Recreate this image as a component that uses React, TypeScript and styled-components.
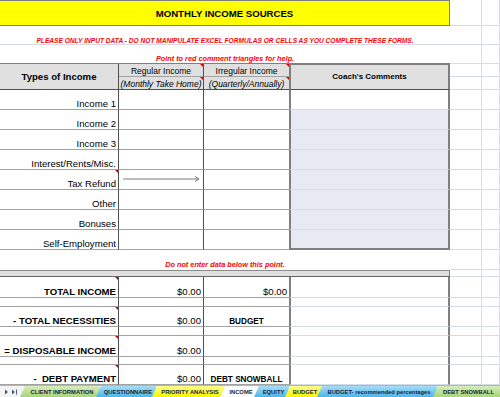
import React from "react";
import styled, { createGlobalStyle, css } from "styled-components";

const GRID = "#d5dbe7";
const LINE = "#a3a3a3";
const DARK = "#505050";
const FRAME = "#7f7f7f";

const GlobalStyle = createGlobalStyle`
  html, body { margin: 0; padding: 0; background: #fff; }
  body { font-family: "Liberation Sans", Arial, sans-serif; overflow: hidden; }
`;

const Page = styled.div`
  width: 500px;
  height: 397px;
  display: flex;
  flex-direction: column;
  overflow: hidden;
  background: #fff;
`;

const Sheet = styled.div`
  display: grid;
  grid-template-columns: 119px 85px 85px 161px 32px 18px;
  grid-template-rows: 26px 19px 19px 13px 13px repeat(8, 20px) 20px 7px 21px 9px 20px 9px 21px 8px 20px;
  height: 385px;
  flex: none;
`;

type CellProps = { $span?: number; $rows?: number; $note?: boolean };

const Cell = styled.div<CellProps>`
  position: relative;
  box-sizing: border-box;
  min-width: 0;
  display: flex;
  align-items: flex-end;
  justify-content: flex-start;
  white-space: pre;
  line-height: 1;
  color: #000;
  border-right: 1px solid ${GRID};
  border-bottom: 1px solid ${GRID};
  grid-column: span ${(p) => p.$span ?? 1};
  grid-row: span ${(p) => p.$rows ?? 1};
  ${(p) =>
    p.$note &&
    css`
      &::after {
        content: "";
        position: absolute;
        top: 0;
        right: 0;
        width: 0;
        height: 0;
        border-style: solid;
        border-width: 0 3px 3px 0;
        border-color: transparent #e00000 transparent transparent;
      }
    `}
`;

const Blank = styled(Cell)``;

const Title = styled(Cell)`
  background: #ffff00;
  border-top: 1px solid ${FRAME};
  border-bottom: 1px solid ${FRAME};
  border-right: 1px solid ${FRAME};
  justify-content: center;
  align-items: center;
  padding-top: 2px;
  font-weight: bold;
  font-size: 9.6px;
`;

const Notice = styled(Cell)<{ $size: number; $edge?: string }>`
  justify-content: center;
  color: #ff0000;
  font-style: italic;
  font-weight: bold;
  font-size: ${(p) => p.$size}px;
  line-height: 0.9;
  border-right: none;
  border-bottom: 1px solid ${(p) => p.$edge ?? GRID};
`;

const HeadCell = styled(Cell)<{ $size: number; $bold?: boolean; $italic?: boolean; $edge?: string; $open?: boolean; $mid?: boolean }>`
  background: #e0e0e0;
  justify-content: center;
  align-items: ${(p) => (p.$mid ? "center" : "flex-end")};
  padding-bottom: ${(p) => (p.$mid ? "0" : "1px")};
  font-size: ${(p) => p.$size}px;
  font-weight: ${(p) => (p.$bold ? "bold" : "normal")};
  font-style: ${(p) => (p.$italic ? "italic" : "normal")};
  border-right: ${(p) => (p.$open ? "none" : `1px solid ${DARK}`)};
  border-bottom: 1px solid ${(p) => p.$edge ?? LINE};
`;

const CoachHead = styled(Cell)`
  background: #e0e0e0;
  border-top: 1px solid ${FRAME};
  border-left: 2px solid ${FRAME};
  border-right: 2px solid ${FRAME};
  border-bottom: 1px solid ${DARK};
  align-items: center;
  justify-content: center;
  font-weight: bold;
  font-size: 8px;
`;

const RowLabel = styled(Cell)<{ $bold?: boolean }>`
  justify-content: flex-end;
  padding-right: 2px;
  font-size: 9.6px;
  font-weight: ${(p) => (p.$bold ? "bold" : "normal")};
  border-right: 1px solid ${DARK};
  border-bottom: 1px solid ${LINE};
`;

const Entry = styled(Cell)<{ $open?: boolean; $align?: "right" | "center"; $bold?: boolean }>`
  justify-content: ${(p) => (p.$align === "center" ? "center" : "flex-end")};
  padding-right: ${(p) => (p.$align === "right" ? "2px" : "0")};
  font-size: ${(p) => (p.$bold ? "8.2px" : "9.6px")};
  font-weight: ${(p) => (p.$bold ? "bold" : "normal")};
  border-right: ${(p) => (p.$open ? "none" : `1px solid ${DARK}`)};
  border-bottom: 1px solid ${LINE};
`;

const Comment = styled(Cell)<{ $shade?: boolean; $end?: boolean }>`
  background: ${(p) => (p.$shade ? "#e7e9f3" : "#fff")};
  border-left: 2px solid ${FRAME};
  border-right: 2px solid ${FRAME};
  border-bottom: ${(p) => (p.$end ? `2px solid ${FRAME}` : `1px solid ${p.$shade ? "#d9dcea" : GRID}`)};
`;

const Band = styled(Cell)`
  background: #e0e0e0;
  border-top: 1px solid #8c8c8c;
  border-bottom: 1px solid #666;
  border-right: 1px solid ${FRAME};
`;

const Arrow = styled.svg`
  width: 84px;
  height: 19px;
  flex: none;
  align-self: flex-start;
`;

const TabBar = styled.div`
  display: flex;
  height: 12px;
  flex: none;
  background: #f4f4f4;
  border-top: 1px solid #b5b5b5;
  box-sizing: border-box;
`;

const Nav = styled.div`
  width: 24px;
  flex: none;
  display: flex;
  align-items: center;
  gap: 2px;
  padding-left: 4px;
  box-sizing: border-box;
`;

const tones = {
  green: "linear-gradient(#d6eebb, #a7d57a)",
  blue: "linear-gradient(#a6ddf7, #4ab7e9)",
  yellow: "linear-gradient(#ffff8a, #f6f600)",
  white: "#ffffff",
};

const Tab = styled.div<{ $tone: keyof typeof tones; $w: number }>`
  width: ${(p) => p.$w}px;
  flex: none;
  margin-left: -4px;
  box-sizing: border-box;
  padding-left: 4px;
  clip-path: polygon(5px 0, 100% 0, 100% 100%, 0 100%);
  background: ${(p) => tones[p.$tone]};
  display: flex;
  align-items: center;
  justify-content: center;
  font-size: 5.8px;
  font-weight: bold;
  color: #1b1b3a;
  white-space: nowrap;
`;

const incomeRows = [
  "Income 1",
  "Income 2",
  "Income 3",
  "Interest/Rents/Misc.",
  "Tax Refund",
  "Other",
  "Bonuses",
  "Self-Employment",
];

const totals: { label: string; b: string; c: string; cAlign: "right" | "center"; cBold: boolean }[] = [
  { label: "TOTAL INCOME", b: "$0.00", c: "$0.00", cAlign: "right", cBold: false },
  { label: "- TOTAL NECESSITIES", b: "$0.00", c: "BUDGET", cAlign: "center", cBold: true },
  { label: "= DISPOSABLE INCOME", b: "$0.00", c: "", cAlign: "center", cBold: true },
  { label: "-  DEBT PAYMENT", b: "$0.00", c: "DEBT SNOWBALL", cAlign: "center", cBold: true },
];

const tabs: { name: string; tone: keyof typeof tones; w: number }[] = [
  { name: "CLIENT INFORMATION", tone: "green", w: 80 },
  { name: "QUESTIONNAIRE", tone: "blue", w: 60 },
  { name: "PRIORITY ANALYSIS", tone: "yellow", w: 72 },
  { name: "INCOME", tone: "white", w: 38 },
  { name: "EQUITY", tone: "blue", w: 35 },
  { name: "BUDGET", tone: "yellow", w: 36 },
  { name: "BUDGET- recommended percentages", tone: "blue", w: 120 },
  { name: "DEBT SNOWBALL", tone: "green", w: 67 },
];

const Margin = () => (
  <>
    <Blank />
    <Blank />
  </>
);

export default function App() {
  return (
    <Page>
      <GlobalStyle />
      <Sheet>
        <Title $span={4}>MONTHLY INCOME SOURCES</Title>
        <Margin />

        <Notice $span={4} $size={6.6}>
          PLEASE ONLY INPUT DATA - DO NOT MANIPULATE EXCEL FORMULAS OR CELLS AS YOU COMPLETE THESE FORMS.
        </Notice>
        <Margin />

        <Notice $span={4} $size={7.3} $edge={FRAME}>
          Point to red comment triangles for help.
        </Notice>
        <Margin />

        <HeadCell $rows={2} $size={9.6} $bold $mid $edge={DARK}>
          Types of Income
        </HeadCell>
        <HeadCell $size={8.5} $note>Regular Income</HeadCell>
        <HeadCell $size={8.5} $open $note>Irregular Income</HeadCell>
        <CoachHead $rows={2}>Coach's Comments</CoachHead>
        <Margin />
        <HeadCell $size={8.5} $italic $edge={DARK} $note>(Monthly Take Home)</HeadCell>
        <HeadCell $size={8.5} $italic $open $edge={DARK} $note>(Quarterly/Annually)</HeadCell>
        <Margin />

        {incomeRows.map((label, i) => (
          <React.Fragment key={label}>
            <RowLabel $note={label === "Tax Refund"}>{label}</RowLabel>
            <Entry>
              {label === "Tax Refund" && (
                <Arrow viewBox="0 0 84 19">
                  <line x1="4" y1="9" x2="80" y2="9" stroke="#7a7a7a" strokeWidth="1" />
                  <polyline points="76,6.5 80,9 76,11.5" fill="none" stroke="#7a7a7a" strokeWidth="1" />
                </Arrow>
              )}
            </Entry>
            <Entry $open />
            <Comment $shade={i > 0} $end={i === incomeRows.length - 1} />
            <Margin />
          </React.Fragment>
        ))}

        <Notice $span={4} $size={7.3} $edge="transparent">
          Do not enter data below this point.
        </Notice>
        <Margin />

        <Band $span={4} />
        <Margin />

        {totals.map((t, i) => (
          <React.Fragment key={t.label}>
            <RowLabel $bold $note>{t.label}</RowLabel>
            <Entry $align="right">{t.b}</Entry>
            <Entry $open $align={t.cAlign} $bold={t.cBold}>
              {t.c}
            </Entry>
            <Comment />
            <Margin />
            {i < totals.length - 1 && (
              <>
                <RowLabel />
                <Entry />
                <Entry $open />
                <Comment />
                <Margin />
              </>
            )}
          </React.Fragment>
        ))}
      </Sheet>

      <TabBar>
        <Nav>
          <svg width="5" height="6" viewBox="0 0 5 6">
            <polygon points="1,0.5 4,3 1,5.5" fill="#4a5a7a" />
          </svg>
          <svg width="7" height="6" viewBox="0 0 7 6">
            <polygon points="1,0.5 4,3 1,5.5" fill="#4a5a7a" />
            <rect x="5" y="0.5" width="1" height="5" fill="#4a5a7a" />
          </svg>
        </Nav>
        {tabs.map((t) => (
          <Tab key={t.name} $tone={t.tone} $w={t.w}>
            {t.name}
          </Tab>
        ))}
      </TabBar>
    </Page>
  );
}
